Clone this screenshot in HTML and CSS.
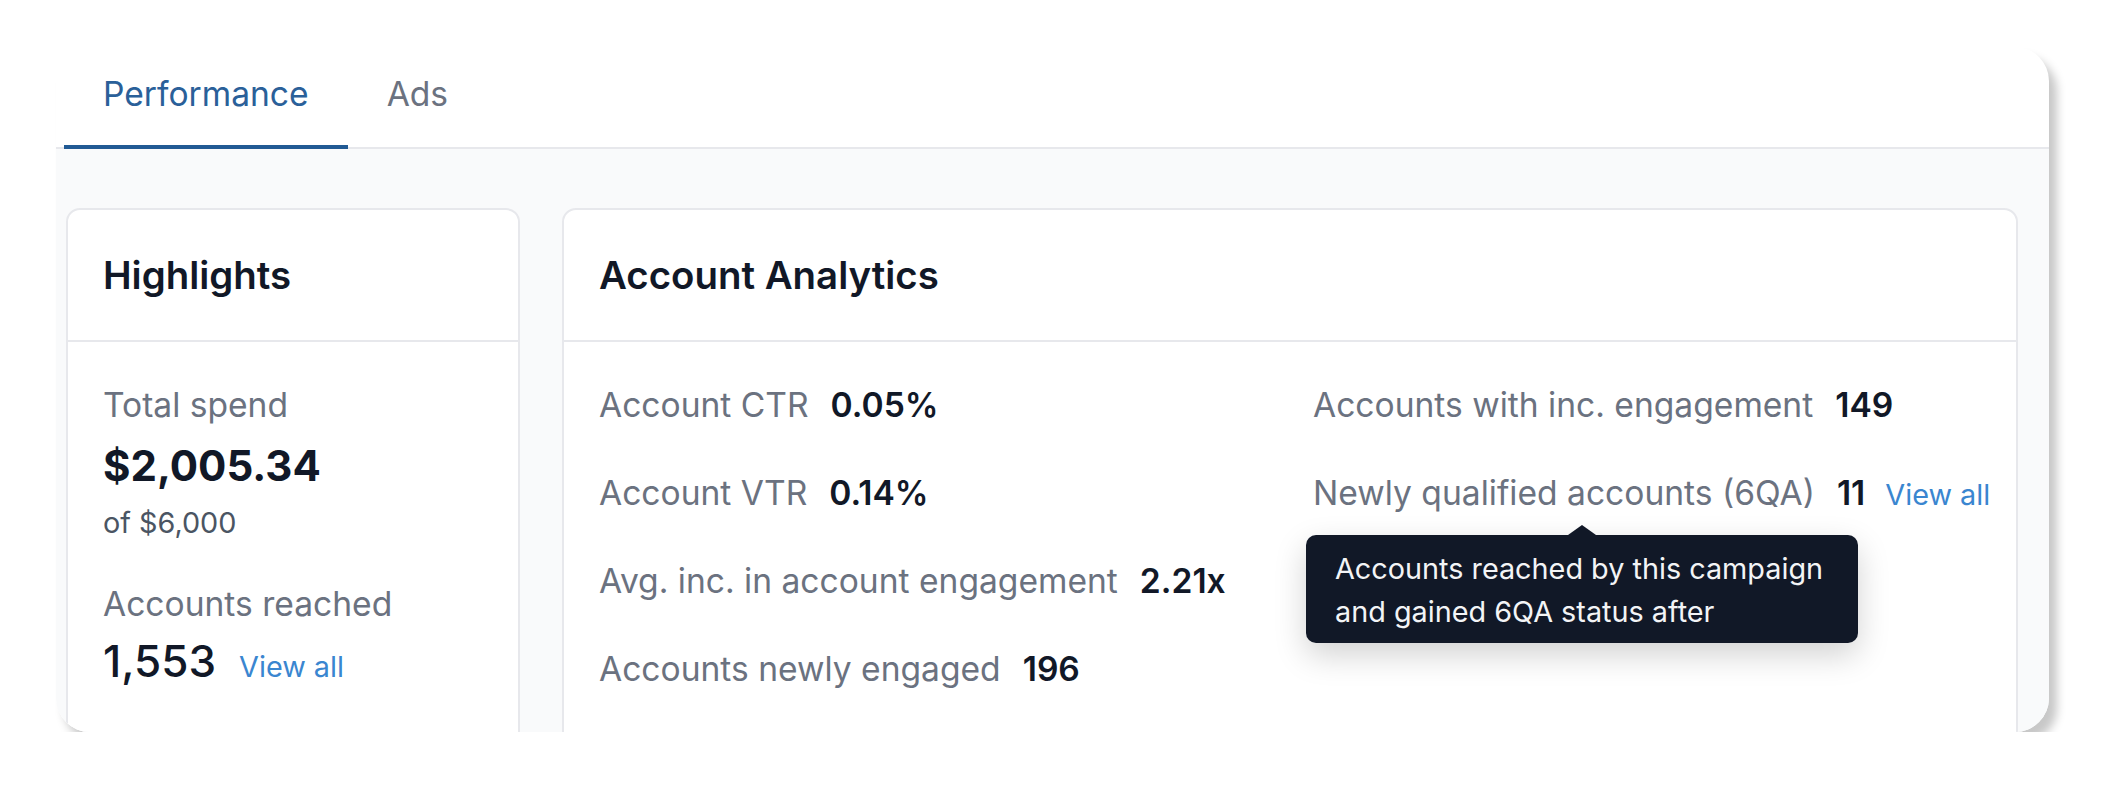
FILE: index.html
```html
<!DOCTYPE html>
<html lang="en">
<head>
  <meta charset="UTF-8">
  <title>Campaign Performance</title>
  <link rel="stylesheet" href="styles.css">
</head>
<body>
  <div class="frame">
    <nav class="tabs">
      <div class="tab active">Performance</div>
      <div class="tab">Ads</div>
    </nav>

    <div class="content">
      <section class="card highlights">
        <div class="card-header">Highlights</div>
        <div class="card-body">
          <div class="label">Total spend</div>
          <div class="big-value">$2,005.34</div>
          <div class="sub">of $6,000</div>
          <div class="label spaced">Accounts reached</div>
          <div class="big-row">
            <span class="big-value medium">1,553</span>
            <a class="link" href="#">View all</a>
          </div>
        </div>
      </section>

      <section class="card analytics">
        <div class="card-header">Account Analytics</div>
        <div class="card-body stats">
          <div class="stat-col">
            <div class="stat"><span class="label">Account CTR</span><span class="value">0.05%</span></div>
            <div class="stat"><span class="label">Account VTR</span><span class="value">0.14%</span></div>
            <div class="stat"><span class="label">Avg. inc. in account engagement</span><span class="value">2.21x</span></div>
            <div class="stat"><span class="label">Accounts newly engaged</span><span class="value">196</span></div>
          </div>
          <div class="stat-col">
            <div class="stat"><span class="label">Accounts with inc. engagement</span><span class="value">149</span></div>
            <div class="stat">
              <span class="label has-tip">Newly qualified accounts (6QA)
                <span class="tooltip">Accounts reached by this campaign<br>and gained 6QA status after</span>
              </span>
              <span class="value">11</span>
              <a class="link" href="#">View all</a>
            </div>
          </div>
        </div>
      </section>
    </div>
  </div>
</body>
</html>
```

FILE: styles.css
```css
body {
  margin: 0;
  background: #fff;
  font-family: Inter, "Noto Sans", sans-serif;
  color: #111827;
}
.frame {
  margin: 47px 0 0 56px;
  width: 1993px;
  height: 685px;
  border-radius: 34px;
  overflow: hidden;
  background: #fff;
  box-shadow: 8px 10px 10px rgba(0, 0, 0, 0.22);
}
.tabs {
  display: flex;
  height: 100px;
  padding-left: 8px;
  border-bottom: 2px solid #e7e8ec;
}
.tab {
  display: flex;
  align-items: center;
  height: 102px;
  box-sizing: border-box;
  padding: 0 39px 6px;
  margin-bottom: -2px;
  font-size: 33.6px;
  color: #6b7280;
  border-bottom: 4px solid transparent;
}
.tab.active {
  color: #2a6099;
  border-bottom-color: #215a94;
}
.content {
  display: flex;
  gap: 42px;
  padding: 59px 31px 0 10px;
  background: #f9fafb;
  height: 100%;
}
.card {
  background: #fff;
  border: 2px solid #e7e8ec;
  border-radius: 14px;
  min-height: 600px;
}
.highlights {
  width: 454px;
  box-sizing: border-box;
}
.analytics {
  flex: 1;
}
.card-header {
  height: 130px;
  display: flex;
  align-items: center;
  padding-left: 35px;
  border-bottom: 2px solid #e7e8ec;
  font-size: 38.4px;
  font-weight: 600;
  color: #111827;
}
.card-body {
  padding: 41px 35px 0;
}
.label {
  font-size: 33.6px;
  line-height: 44px;
  color: #6b7280;
}
.label.spaced {
  margin-top: 39px;
}
.big-value {
  margin-top: 10px;
  font-size: 42px;
  line-height: 58px;
  font-weight: 700;
  color: #111827;
}
.big-value.medium {
  margin-top: 0;
  font-size: 44px;
  font-weight: 500;
}
.sub {
  margin-top: 8px;
  font-size: 28.8px;
  line-height: 40px;
  color: #4b5563;
}
.big-row {
  display: flex;
  align-items: baseline;
  gap: 23px;
  margin-top: 6px;
}
.link {
  font-size: 28.8px;
  color: #3a86d0;
  text-decoration: none;
}
.stats {
  display: grid;
  grid-template-columns: minmax(0, 1fr) minmax(0, 1fr);
  column-gap: 46px;
}
.stat-col {
  display: flex;
  flex-direction: column;
  gap: 44px;
}
.stat {
  display: flex;
  align-items: baseline;
  white-space: nowrap;
}
.stat .value {
  margin-left: 22px;
  font-size: 33.6px;
  line-height: 44px;
  font-weight: 600;
  color: #111827;
}
.stat .link {
  margin-left: 20px;
}
.has-tip {
  position: relative;
}
.tooltip {
  position: absolute;
  left: -7px;
  top: 64px;
  width: 552px;
  box-sizing: border-box;
  padding: 12px 29px 10px;
  background: #111827;
  color: #f3f4f6;
  border-radius: 10px;
  font-size: 28.8px;
  line-height: 43px;
  box-shadow: 0 12px 32px rgba(0, 0, 0, 0.18);
  z-index: 2;
}
.tooltip::before {
  content: "";
  position: absolute;
  left: 50%;
  top: -10px;
  margin-left: -14px;
  border-left: 14px solid transparent;
  border-right: 14px solid transparent;
  border-bottom: 10px solid #111827;
}
```
